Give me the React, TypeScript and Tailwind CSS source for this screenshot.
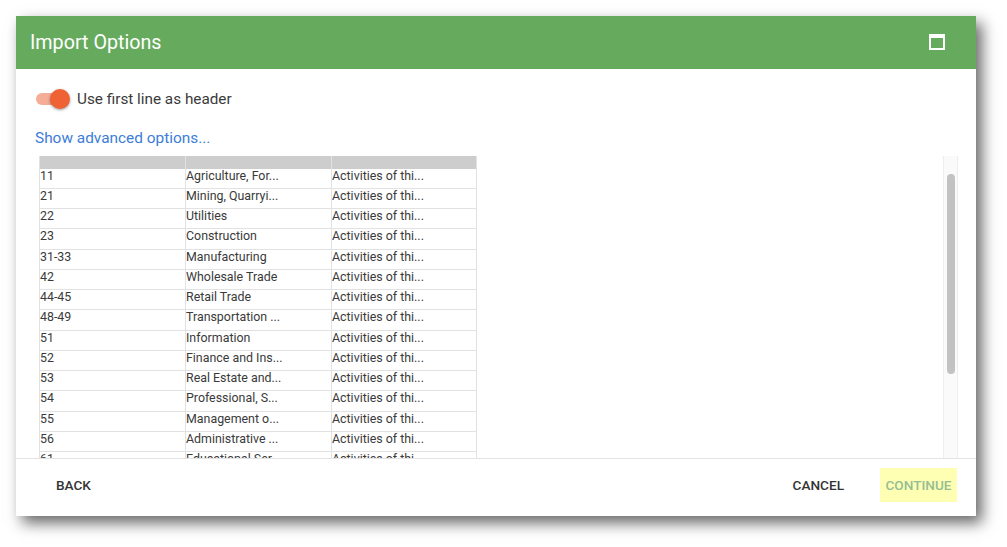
const rows = [
  ['11', 'Agriculture, For...'],
  ['21', 'Mining, Quarryi...'],
  ['22', 'Utilities'],
  ['23', 'Construction'],
  ['31-33', 'Manufacturing'],
  ['42', 'Wholesale Trade'],
  ['44-45', 'Retail Trade'],
  ['48-49', 'Transportation ...'],
  ['51', 'Information'],
  ['52', 'Finance and Ins...'],
  ['53', 'Real Estate and...'],
  ['54', 'Professional, S...'],
  ['55', 'Management o...'],
  ['56', 'Administrative ...'],
  ['61', 'Educational Ser...'],
];

function PreviewTable() {
  return (
    <div className="ml-[23px] h-[302px] w-[438px] shrink-0 overflow-hidden border-l border-r border-[#e2e2e2] text-[12.4px] text-[#3a3a3a]">
      <div className="grid h-[12.5px] grid-cols-[146px_146px_144px] bg-[#cdcdcd]">
        <div className="border-r border-[#e2e2e2]" />
        <div className="border-r border-[#e2e2e2]" />
        <div />
      </div>
      {rows.map((row) => (
        <div
          key={row[0]}
          className="grid h-[20.25px] grid-cols-[146px_146px_144px] border-b border-[#e2e2e2] leading-[14.5px]"
        >
          <div className="overflow-hidden border-r border-[#e2e2e2] whitespace-nowrap">{row[0]}</div>
          <div className="overflow-hidden border-r border-[#e2e2e2] whitespace-nowrap">{row[1]}</div>
          <div className="overflow-hidden whitespace-nowrap">Activities of thi...</div>
        </div>
      ))}
    </div>
  );
}

export default function App() {
  return (
    <div className="h-[547px] w-[1007px] bg-white pt-4 pl-4 font-['Roboto',sans-serif]">
      <div className="flex h-[500px] w-[960px] flex-col bg-white shadow-[6px_7px_14px_rgba(0,0,0,0.6)]">
        <div className="flex h-[53px] shrink-0 items-center justify-between bg-[#66ab5d] pr-[31px] pl-[14px]">
          <h2 className="text-[19.7px] leading-[52px] font-normal text-white">Import Options</h2>
          <div className="mb-[2px] h-[16px] w-[16px] border-2 border-t-[4px] border-white" />
        </div>

        <div className="flex h-[87px] shrink-0 flex-col pl-[19px]">
          <div className="mt-[19px] flex items-center">
            <div className="relative ml-px h-[12px] w-[29px] rounded-full bg-[#f5ad97]">
              <div className="absolute top-[-4px] right-[-5px] h-[20px] w-[20px] rounded-full bg-[#ee6233] shadow-[0_1px_3px_rgba(0,0,0,0.4)]" />
            </div>
            <span className="ml-[12px] text-[15.3px] leading-[22px] text-[#3a3a3a]">Use first line as header</span>
          </div>
          <a className="mt-[18px] text-[15.4px] leading-[20px] text-[#3b7dd8]">Show advanced options...</a>
        </div>

        <div className="flex min-h-0 flex-1 justify-between overflow-hidden">
          <PreviewTable />
          <div className="mr-[18px] flex w-[15px] shrink-0 justify-center border-r border-l border-[#eeeeee] bg-[#fafafa] pt-[18px]">
            <div className="h-[200px] w-[8px] rounded-full bg-[#c2c2c2]" />
          </div>
        </div>

        <div className="flex h-[58px] shrink-0 justify-between border-t border-[#e4e4e4] pr-[19px] pl-[40px] text-[13.6px] font-medium">
          <button className="h-[53px] text-[#333]">BACK</button>
          <div className="flex items-start">
            <button className="mr-[36px] h-[53px] text-[#333]">CANCEL</button>
            <button className="mt-[9px] h-[34px] w-[77px] bg-[#feffb3] text-[#96bd94]">CONTINUE</button>
          </div>
        </div>
      </div>
    </div>
  );
}
